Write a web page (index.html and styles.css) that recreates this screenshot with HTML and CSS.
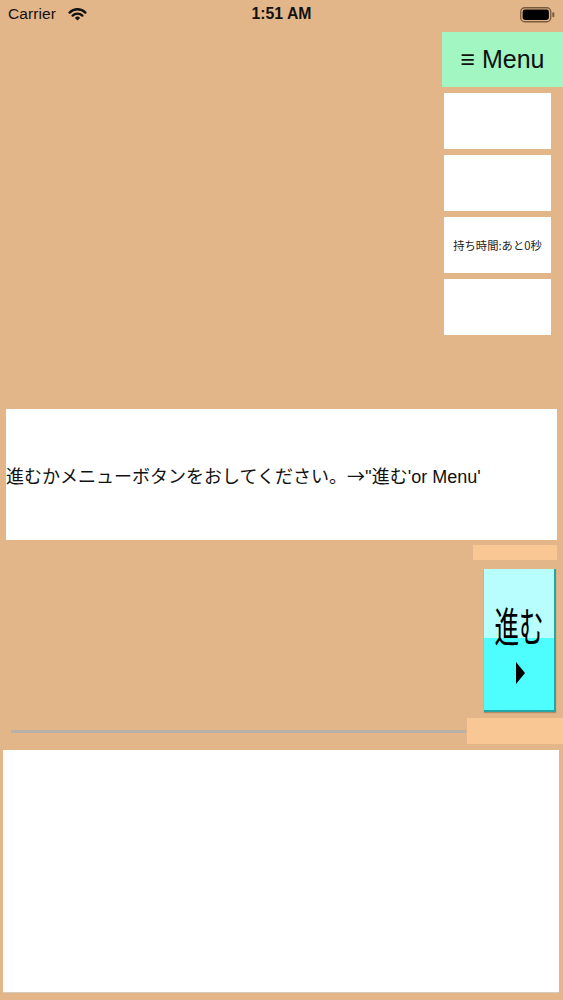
FILE: index.html
```html
<!DOCTYPE html>
<html lang="ja">
<head>
<meta charset="utf-8">
<title>進む</title>
<link rel="stylesheet" href="styles.css">
</head>
<body>
<div class="screen">
  <div class="statusbar">
    <div class="sb-left">
      <span class="carrier">Carrier</span>
      <svg class="wifi" width="19" height="13" viewBox="0 0 19 13">
        <path d="M1.6 4.6 A11 11 0 0 1 17.4 4.6" fill="none" stroke="#111" stroke-width="2.3" stroke-linecap="round"/>
        <path d="M4.6 7.6 A7 7 0 0 1 14.4 7.6" fill="none" stroke="#111" stroke-width="2.3" stroke-linecap="round"/>
        <path d="M9.5 12.6 L6.9 9.9 A3.7 3.7 0 0 1 12.1 9.9 Z" fill="#111"/>
      </svg>
    </div>
    <div class="sb-time">1:51 AM</div>
    <div class="sb-right">
      <svg class="battery" width="36" height="16" viewBox="0 0 36 16">
        <rect x="0.75" y="0.75" width="30" height="14" rx="4" fill="none" stroke="#7a5a3c" stroke-width="1.3"/>
        <rect x="2.6" y="2.6" width="26.3" height="10.3" rx="2.3" fill="#000"/>
        <rect x="32.3" y="5.3" width="2" height="5" rx="1" fill="#7a5a3c"/>
      </svg>
    </div>
  </div>

  <div class="top">
    <div class="side">
      <div class="menu">≡ Menu</div>
      <div class="slot"></div>
      <div class="slot"></div>
      <div class="slot">持ち時間:あと0秒</div>
      <div class="slot"></div>
    </div>
  </div>

  <div class="message">進むかメニューボタンをおしてください。<span class="cjk">→</span>''進む'or Menu'</div>

  <div class="tag"></div>

  <div class="go-row">
    <div class="go">
      <span class="go-text">進む</span>
      <svg class="go-arrow" width="9" height="22" viewBox="0 0 9 22"><polygon points="0,0 9,11 0,22" fill="#000"/></svg>
    </div>
  </div>

  <div class="slider-row">
    <div class="track"></div>
    <div class="tag2"></div>
  </div>

  <div class="panel"></div>
</div>
</body>
</html>
```

FILE: styles.css
```css
html, body {
  margin: 0;
  padding: 0;
}
body {
  background: #e3b68a;
  font-family: "Liberation Sans", "Noto Sans CJK JP", sans-serif;
  color: #111;
}
.screen {
  width: 563px;
  height: 1000px;
  overflow: hidden;
  background: #e3b68a;
}
.statusbar {
  height: 28px;
  display: grid;
  grid-template-columns: 1fr auto 1fr;
  align-items: center;
}
.sb-left {
  display: flex;
  align-items: center;
  padding-left: 8px;
}
.carrier {
  font-size: 15.5px;
  letter-spacing: 0.1px;
}
.wifi {
  margin-left: 12px;
}
.sb-time {
  font-size: 15.8px;
  font-weight: bold;
}
.sb-right {
  display: flex;
  justify-content: flex-end;
  padding-right: 7px;
}
.battery {
  display: block;
  margin-top: 1px;
}
.top {
  height: 377px;
  padding-top: 4px;
  display: flex;
  justify-content: flex-end;
}
.side {
  width: 121px;
  display: flex;
  flex-direction: column;
}
.menu {
  height: 55px;
  background: #a1f6c1;
  display: flex;
  align-items: center;
  justify-content: center;
  font-size: 25px;
  color: #111;
}
.slot {
  width: 107px;
  height: 56px;
  margin-left: 2px;
  margin-top: 6px;
  background: #fff;
  display: flex;
  align-items: center;
  justify-content: center;
  font-family: "Noto Sans CJK JP", sans-serif;
  font-size: 11.3px;
  color: #222;
}
.message {
  height: 131px;
  margin: 0 6px;
  background: #fff;
  display: flex;
  align-items: center;
  font-size: 18px;
  white-space: nowrap;
  color: #111;
}
.cjk {
  font-family: "Noto Sans CJK JP", sans-serif;
}
.tag {
  width: 84px;
  height: 15px;
  margin: 5px 6px 0 auto;
  background: #f9c794;
}
.go-row {
  margin-top: 9px;
  display: flex;
  justify-content: flex-end;
  padding-right: 7px;
}
.go {
  width: 70px;
  height: 141px;
  background: linear-gradient(to bottom, #b9fefe 0, #b9fefe 69px, #4efdfd 69px, #4efdfd 100%);
  border-right: 2px solid #22a6a6;
  border-bottom: 2px solid #22a6a6;
  box-shadow: 0 1px 1px rgba(90, 60, 30, 0.35);
  display: flex;
  flex-direction: column;
  align-items: center;
}
.go-text {
  display: block;
  margin-top: 35px;
  font-family: "Noto Sans CJK JP", sans-serif;
  font-size: 41px;
  line-height: 40px;
  transform: scaleX(0.6);
  white-space: nowrap;
  color: #000;
}
.go-arrow {
  display: block;
  margin-top: 18px;
  margin-left: 3px;
}
.slider-row {
  margin-top: 6px;
  height: 26px;
  display: flex;
  align-items: center;
}
.track {
  width: 455px;
  height: 3px;
  margin-left: 11px;
  background: #b8b1a9;
}
.tag2 {
  width: 96px;
  height: 26px;
  margin-left: auto;
  background: #f9c794;
}
.panel {
  height: 242px;
  margin: 6px 4px 0 3px;
  background: #fff;
  border-bottom: 1px solid #d8cbbd;
}
```
